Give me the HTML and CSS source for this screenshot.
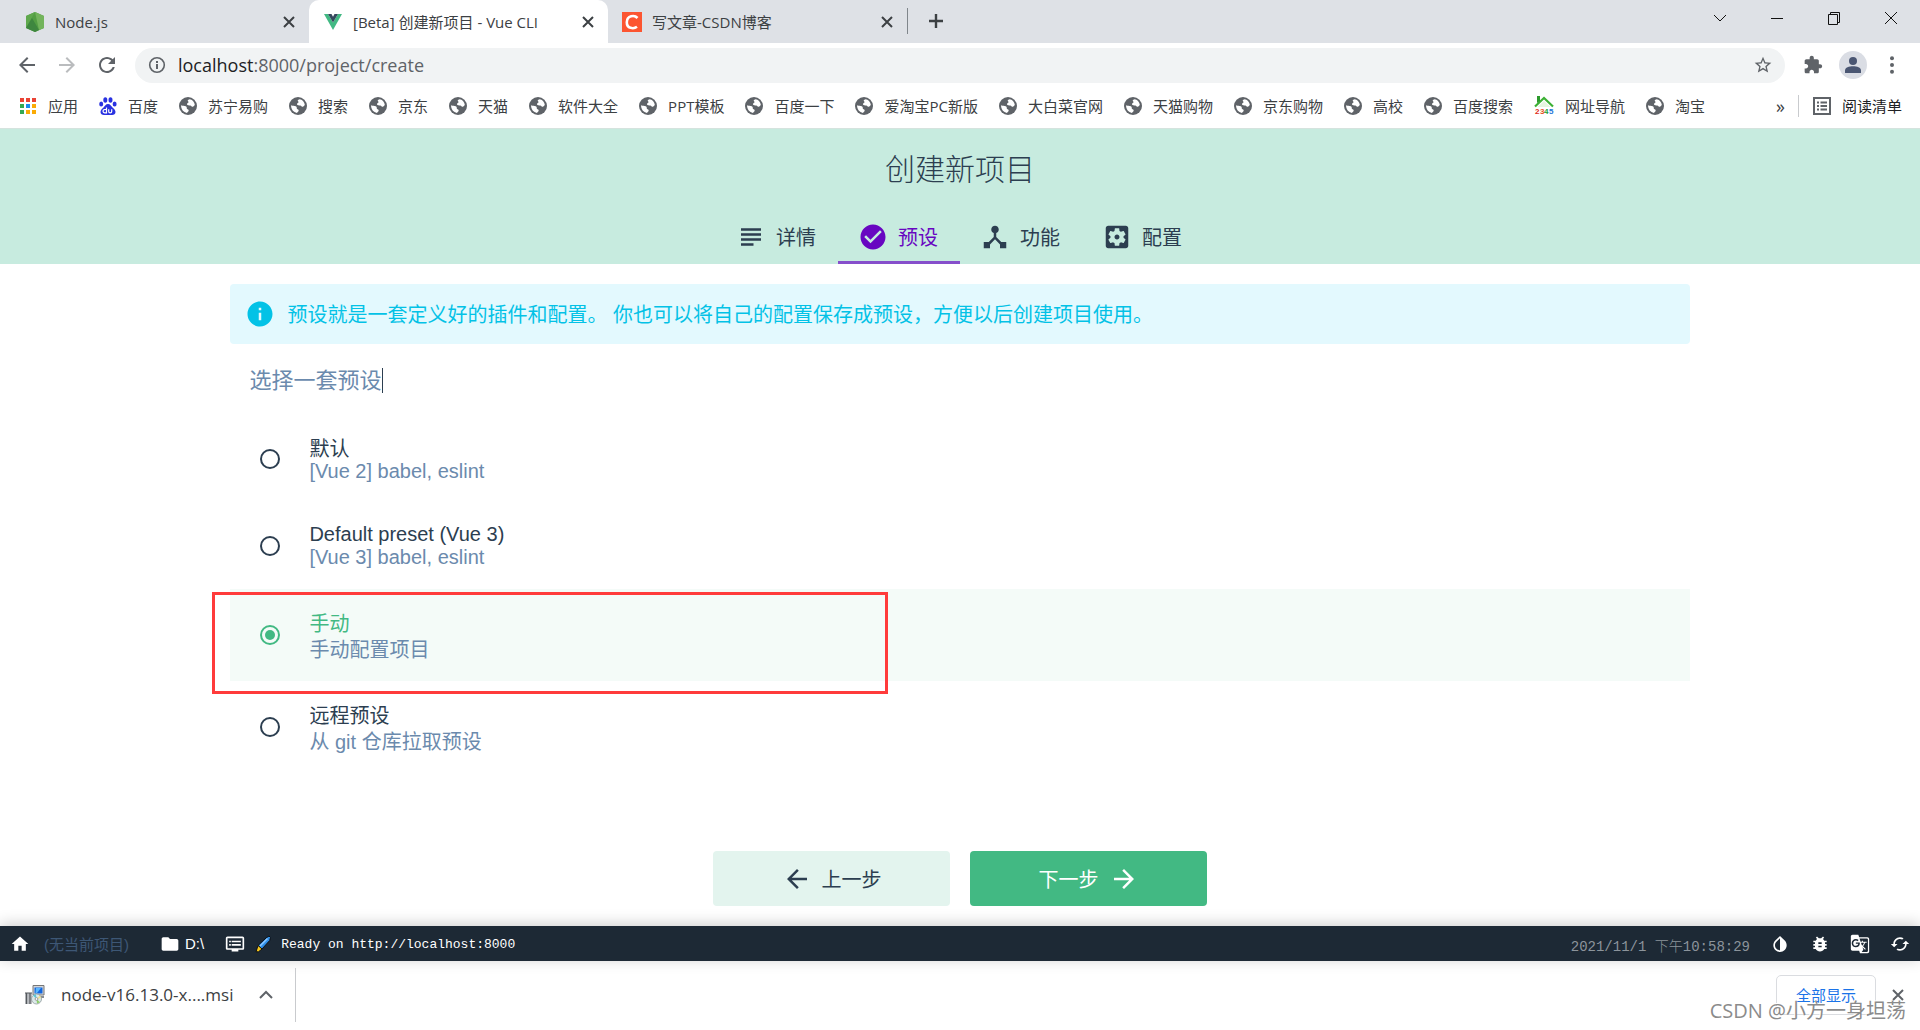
FILE: index.html
```html
<!DOCTYPE html>
<html lang="zh-CN">
<head>
<meta charset="utf-8">
<title>[Beta] 创建新项目 - Vue CLI</title>
<link rel="stylesheet" href="styles.css">
</head>
<body>
<svg class="defs" aria-hidden="true">
  <symbol id="globe" viewBox="0 0 18 18">
    <circle cx="9" cy="9" r="9" fill="#5f6368"/>
    <path d="M10.600 2.200C8.600 2.600 8.200 3.600 9.200 4.400 10.400 5.400 8.200 5.800 8 7 7.800 8.200 9.600 8.600 11 8.400 12.600 8.200 12.400 10 13.800 9.800 15.200 9.600 15.600 8.200 15.800 7.600 15.400 4.800 13.200 2.600 10.600 2.200ZM2.100 8.300C2.800 8.800 4.200 8.800 5.600 8.900 7.600 9 7.900 10.200 7.800 11.400 7.800 12.600 9.800 11.800 9.700 13.600 9.600 14.700 8.600 15.300 8 15.900 4.600 15.500 1.900 12.400 2.100 8.300Z" fill="#fff"/>
  </symbol>
  <symbol id="cross" viewBox="0 0 12 12"><path d="M1 1l10 10M11 1L1 11" fill="none" stroke="currentColor" stroke-width="2"/></symbol>
  <symbol id="back" viewBox="0 0 24 24"><path d="M20 11H7.830l5.590-5.590L12 4l-8 8 8 8 1.410-1.410L7.830 13H20v-2z"/></symbol>
  <symbol id="forward" viewBox="0 0 24 24"><path d="M12 4l-1.410 1.410L16.170 11H4v2h12.170l-5.580 5.590L12 20l8-8z"/></symbol>
</svg>

<header class="browser">
  <div class="tabstrip">
    <div class="tab">
      <svg class="favicon" viewBox="0 0 20 20"><path d="M10 0l9 4v12l-9 4-9-4V4z" fill="#539e43"/><path d="M10 0l9 4v12l-5 2z" fill="#73b45c"/><path d="M10 0L1 16V4z" fill="#5fa84d"/><path d="M1 16L7 6l7 12-4 2z" fill="#3f873f"/></svg>
      <span class="tab-title">Node.js</span>
      <button class="tab-close" aria-label="关闭"><svg><use href="#cross"/></svg></button>
    </div>
    <div class="tab tab-active">
      <svg class="favicon" viewBox="0 0 20 20"><path d="M1 2h4l5 8.500L15 2h4l-9 16z" fill="#42b983"/><path d="M5 2h3.500L10 4.700 11.500 2H15l-5 8.600z" fill="#35495e"/></svg>
      <span class="tab-title">[Beta] 创建新项目 - Vue CLI</span>
      <button class="tab-close" aria-label="关闭"><svg><use href="#cross"/></svg></button>
    </div>
    <div class="tab">
      <svg class="favicon" viewBox="0 0 20 20"><path d="M0 0h20v20H0z" fill="#fc5531"/><path d="M15.500 6C12.500 2.800 5 3.400 4.800 10.200 4.700 16.600 11.500 17.300 15 14.800" fill="none" stroke="#fff" stroke-width="2.600"/></svg>
      <span class="tab-title">写文章-CSDN博客</span>
      <button class="tab-close" aria-label="关闭"><svg><use href="#cross"/></svg></button>
    </div>
    <button class="new-tab" aria-label="新标签页"><svg viewBox="0 0 16 16"><path d="M8 1v14M1 8h14" stroke="#3c4043" stroke-width="2.400"/></svg></button>
    <div class="window-controls">
      <button aria-label="搜索标签页"><svg viewBox="0 0 14 14"><path d="M1 4l6 6 6-6"/></svg></button>
      <button aria-label="最小化"><svg viewBox="0 0 14 14"><path d="M1 7.500h12"/></svg></button>
      <button aria-label="还原"><svg viewBox="0 0 14 14"><path d="M1.500 3.500h9v10h-9zM3.500 3.500v-2h9v10h-2"/></svg></button>
      <button aria-label="关闭窗口"><svg viewBox="0 0 14 14"><path d="M1 1l12 12M13 1L1 13"/></svg></button>
    </div>
  </div>

  <div class="toolbar">
    <button class="nav" aria-label="后退"><svg><use href="#back"/></svg></button>
    <button class="nav nav-off" aria-label="前进" disabled><svg><use href="#forward"/></svg></button>
    <button class="nav" aria-label="重新加载"><svg viewBox="0 0 24 24"><path d="M17.650 6.350C16.200 4.900 14.210 4 12 4c-4.420 0-7.990 3.580-7.990 8s3.570 8 7.990 8c3.730 0 6.840-2.550 7.730-6h-2.080c-.82 2.330-3.040 4-5.650 4-3.310 0-6-2.690-6-6s2.690-6 6-6c1.660 0 3.140.69 4.220 1.780L13 11h7V4l-2.350 2.350z"/></svg></button>
    <div class="omnibox">
      <svg class="site-info" viewBox="0 0 18 18"><circle cx="9" cy="9" r="7.300" fill="none" stroke="#5f6368" stroke-width="1.600"/><path d="M8 8h2v5H8zM8 5h2v2H8z"/></svg>
      <span class="url"><b>localhost</b>:8000/project/create</span>
      <button class="star" aria-label="收藏"><svg viewBox="0 0 24 24"><path d="M22 9.240l-7.190-.62L12 2 9.190 8.630 2 9.240l5.460 4.730L5.820 21 12 17.270 18.180 21l-1.630-7.030L22 9.240zM12 15.400l-3.760 2.270 1-4.280-3.320-2.880 4.380-.38L12 6.100l1.710 4.040 4.380.38-3.320 2.880 1 4.280L12 15.400z"/></svg></button>
    </div>
    <button class="tool" aria-label="扩展程序"><svg viewBox="0 0 24 24"><path d="M20.500 11H19V7c0-1.100-.9-2-2-2h-4V3.500C13 2.120 11.880 1 10.500 1S8 2.120 8 3.500V5H4c-1.100 0-1.990.9-1.990 2v3.800H3.500c1.490 0 2.700 1.210 2.700 2.700s-1.210 2.700-2.700 2.700H2V20c0 1.100.9 2 2 2h3.800v-1.500c0-1.490 1.210-2.700 2.700-2.700 1.490 0 2.700 1.210 2.700 2.700V22H17c1.100 0 2-.9 2-2v-4h1.500c1.380 0 2.500-1.120 2.500-2.500S21.880 11 20.500 11z"/></svg></button>
    <button class="avatar" aria-label="用户"><svg viewBox="0 0 16 16"><circle cx="8" cy="4" r="4"/><path d="M0 16v-2.500C0 10.500 4 9.300 8 9.300s8 1.200 8 4.200V16z"/></svg></button>
    <button class="more" aria-label="菜单"><svg viewBox="0 0 4 18"><circle cx="2" cy="2.200" r="2"/><circle cx="2" cy="9" r="2"/><circle cx="2" cy="15.800" r="2"/></svg></button>
  </div>

  <nav class="bookmarks">
    <a href="#"><svg viewBox="0 0 18 18"><path d="M1 1h4v4H1zM7 1h4v4H7zM13 1h4v4h-4z" fill="#ea4335"/><path d="M1 7h4v4H1zM1 13h4v4H1z" fill="#34a853"/><path d="M7 7h4v4H7z" fill="#1a8cf0"/><path d="M13 7h4v4h-4zM7 13h4v4H7zM13 13h4v4h-4z" fill="#fbab05"/></svg>应用</a>
    <a href="#"><svg viewBox="0 0 18 18"><g fill="#2932e1"><ellipse cx="6.300" cy="3" rx="2" ry="2.800"/><ellipse cx="11.500" cy="3" rx="2" ry="2.800"/><ellipse cx="2.200" cy="7" rx="2" ry="2.600"/><ellipse cx="15.600" cy="7" rx="2" ry="2.600"/><path d="M9 7c2.300 0 3 2 4.500 3.500s3 2.500 3 4.500c0 2-1.500 3-3.500 3H5c-2 0-3.500-1-3.500-3s1.500-3 3-4.500S6.700 7 9 7z"/></g><path d="M7.500 10.500v5.300H5.800c-2.300 0-2.300-3.300 0-3.300h1.700M9.700 12.300v2.200c0 1.800 3 1.800 3 0v-2.200" fill="none" stroke="#fff" stroke-width="1.200"/></svg>百度</a>
    <a href="#"><svg><use href="#globe"/></svg>苏宁易购</a>
    <a href="#"><svg><use href="#globe"/></svg>搜索</a>
    <a href="#"><svg><use href="#globe"/></svg>京东</a>
    <a href="#"><svg><use href="#globe"/></svg>天猫</a>
    <a href="#"><svg><use href="#globe"/></svg>软件大全</a>
    <a href="#"><svg><use href="#globe"/></svg>PPT模板</a>
    <a href="#"><svg><use href="#globe"/></svg>百度一下</a>
    <a href="#"><svg><use href="#globe"/></svg>爱淘宝PC新版</a>
    <a href="#"><svg><use href="#globe"/></svg>大白菜官网</a>
    <a href="#"><svg><use href="#globe"/></svg>天猫购物</a>
    <a href="#"><svg><use href="#globe"/></svg>京东购物</a>
    <a href="#"><svg><use href="#globe"/></svg>高校</a>
    <a href="#"><svg><use href="#globe"/></svg>百度搜索</a>
    <a href="#"><svg class="house" viewBox="0 0 20 20"><path d="M1 10.500L10 2l9 8.500" fill="none" stroke="#3cb034" stroke-width="2.200"/><path d="M3 0h3v5L3 7z" fill="#2c9a2c"/><path d="M3.500 11L10 5l6.500 6z" fill="#e5f5df"/><g font-size="8" font-weight="700" font-family="Liberation Sans, sans-serif"><text x="1" y="18" fill="#e02b20">2</text><text x="6" y="18" fill="#e8501e">3</text><text x="10" y="18" fill="#22a03a">4</text><text x="15" y="18" fill="#2275d8">5</text></g></svg>网址导航</a>
    <a href="#"><svg><use href="#globe"/></svg>淘宝</a>
    <button class="overflow" aria-label="更多书签">»</button>
    <a class="reading" href="#"><svg viewBox="0 0 18 18"><path d="M1 1h16v16H1z" fill="none" stroke="#5f6368" stroke-width="2"/><path d="M4 4.500h2v2H4zM4 8h2v2H4zM4 11.500h2v2H4zM7.500 4.500H14v2H7.500zM7.500 8H14v2H7.500zM7.500 11.500H14v2H7.500z"/></svg>阅读清单</a>
  </nav>
</header>

<section class="project-head">
  <h1>创建新项目</h1>
  <nav class="steps">
    <a href="#"><svg viewBox="0 0 24 24"><path d="M14 17H4v2h10v-2zm6-8H4v2h16V9zM4 15h16v-2H4v2zM4 5v2h16V5H4z"/></svg>详情</a>
    <a href="#" class="current"><svg viewBox="0 0 24 24"><path d="M12 2C6.480 2 2 6.480 2 12s4.480 10 10 10 10-4.480 10-10S17.520 2 12 2zm-2 15l-5-5 1.410-1.410L10 14.170l7.590-7.590L19 8l-9 9z"/></svg>预设</a>
    <a href="#"><svg viewBox="0 0 24 24"><path d="M17 16l-4-4V8.820C14.160 8.400 15 7.300 15 6c0-1.660-1.340-3-3-3S9 4.340 9 6c0 1.300.84 2.400 2 2.820V12l-4 4H3v5h5v-3.050l4-4.200 4 4.200V21h5v-5h-4z"/></svg>功能</a>
    <a href="#"><svg viewBox="0 0 24 24"><path d="M12 10c-1.100 0-2 .9-2 2s.9 2 2 2 2-.9 2-2-.9-2-2-2zm7-7H5c-1.110 0-2 .9-2 2v14c0 1.100.89 2 2 2h14c1.110 0 2-.9 2-2V5c0-1.100-.89-2-2-2zm-1.750 9c0 .23-.02.46-.05.68l1.480 1.160c.13.11.17.3.08.45l-1.400 2.420c-.09.15-.27.21-.43.15l-1.740-.7c-.36.28-.76.51-1.180.69l-.26 1.850c-.03.17-.18.3-.35.3h-2.800c-.17 0-.32-.13-.35-.29l-.26-1.850c-.43-.18-.82-.41-1.180-.69l-1.740.7c-.16.06-.34 0-.43-.15l-1.400-2.420c-.09-.15-.05-.34.08-.45l1.480-1.160c-.03-.23-.05-.46-.05-.69 0-.23.02-.46.05-.68l-1.480-1.160c-.13-.11-.17-.3-.08-.45l1.400-2.420c.09-.15.27-.21.43-.15l1.740.7c.36-.28.76-.51 1.180-.69l.26-1.850c.03-.17.18-.3.35-.3h2.800c.17 0 .32.13.35.29l.26 1.850c.43.18.82.41 1.180.69l1.740-.7c.16-.06.34 0 .43.15l1.400 2.420c.09.15.05.34-.08.45l-1.480 1.160c.03.23.05.46.05.69z"/></svg>配置</a>
  </nav>
</section>

<main class="content">
  <p class="notice"><svg viewBox="0 0 24 24"><path d="M12 2C6.480 2 2 6.480 2 12s4.480 10 10 10 10-4.480 10-10S17.520 2 12 2zm1 15h-2v-6h2v6zm0-8h-2V7h2v2z"/></svg><span>预设就是一套定义好的插件和配置。 你也可以将自己的配置保存成预设，方便以后创建项目使用。</span></p>
  <h2><span>选择一套预设</span></h2>
  <form class="presets">
    <label class="preset"><input type="radio" name="preset"><span class="preset-text"><span class="name">默认</span><span class="desc latin">[Vue 2] babel, eslint</span></span></label>
    <label class="preset"><input type="radio" name="preset"><span class="preset-text"><span class="name latin">Default preset (Vue 3)</span><span class="desc latin">[Vue 3] babel, eslint</span></span></label>
    <label class="preset selected"><input type="radio" name="preset" checked><span class="preset-text"><span class="name">手动</span><span class="desc">手动配置项目</span></span></label>
    <label class="preset"><input type="radio" name="preset"><span class="preset-text"><span class="name">远程预设</span><span class="desc">从 git 仓库拉取预设</span></span></label>
  </form>
  <div class="actions">
    <button class="btn"><svg><use href="#back"/></svg>上一步</button>
    <button class="btn btn-primary">下一步<svg><use href="#forward"/></svg></button>
  </div>
</main>

<footer class="status">
  <a href="#" class="home" aria-label="主页"><svg viewBox="0 0 24 24"><path d="M10 20v-6h4v6h5v-8h3L12 3 2 12h3v8z"/></svg></a>
  <span class="no-project">(无当前项目)</span>
  <span class="cwd"><svg viewBox="0 0 24 24"><path d="M10 4H4c-1.100 0-1.990.9-1.990 2L2 18c0 1.100.9 2 2 2h16c1.100 0 2-.9 2-2V8c0-1.100-.9-2-2-2h-8l-2-2z"/></svg>D:\</span>
  <span class="log"><svg viewBox="0 0 24 24"><path d="M21 3H3c-1.100 0-2 .9-2 2v12c0 1.100.9 2 2 2h5v2h8v-2h5c1.100 0 1.990-.9 1.990-2L23 5c0-1.100-.9-2-2-2zm0 14H3V5h18v12zm-2-9H8v2h11V8zm0 4H8v2h11v-2zM7 8H5v2h2V8zm0 4H5v2h2v-2z"/></svg><svg class="crayon" viewBox="0 0 16 18"><path d="M14 1l1.500 1.500-.8 3L7 14l-4-3.500L11 3z" fill="#2f8fe8" stroke="#0b0f14"/><path d="M5 11l7.500-7.500" stroke="#8cc8ff" stroke-width="1.500"/><path d="M3 10.500L7 14l-3.500 2.800H1z" fill="#f7c81e" stroke="#0b0f14"/></svg><span class="mono">Ready on http://localhost:8000</span></span>
  <time class="mono">2021/11/1 下午10:58:29</time>
  <button aria-label="切换主题"><svg viewBox="0 0 24 24"><path d="M17.660 7.930L12 2.270 6.340 7.930c-3.120 3.120-3.120 8.190 0 11.310C7.900 20.800 9.950 21.580 12 21.580c2.050 0 4.100-.78 5.660-2.340 3.120-3.120 3.120-8.190 0-11.310zM12 19.590c-1.600 0-3.110-.62-4.240-1.760C6.620 16.690 6 15.190 6 13.590s.62-3.110 1.760-4.240L12 5.100v14.490z"/></svg></button>
  <button aria-label="报告问题"><svg viewBox="0 0 24 24"><path d="M20 8h-2.810c-.45-.78-1.070-1.450-1.820-1.960L17 4.410 15.590 3l-2.170 2.170C12.960 5.060 12.490 5 12 5c-.49 0-.96.06-1.410.17L8.410 3 7 4.410l1.620 1.630C7.880 6.550 7.260 7.220 6.810 8H4v2h2.090c-.05.33-.09.66-.09 1v1H4v2h2v1c0 .34.04.67.09 1H4v2h2.810c1.040 1.790 2.970 3 5.190 3s4.150-1.210 5.190-3H20v-2h-2.090c.05-.33.09-.66.09-1v-1h2v-2h-2v-1c0-.34-.04-.67-.09-1H20V8zm-6 8h-4v-2h4v2zm0-4h-4v-2h4v2z"/></svg></button>
  <button aria-label="翻译"><svg viewBox="0 0 24 24"><path d="M21 4H11l-1-3H3c-1.100 0-2 .9-2 2v15c0 1.100.9 2 2 2h8l1 3h9c1.100 0 2-.9 2-2V6c0-1.100-.9-2-2-2zM7 16c-2.760 0-5-2.240-5-5s2.240-5 5-5c1.350 0 2.480.5 3.350 1.300L9.030 8.570c-.38-.36-1.040-.78-2.030-.78-1.740 0-3.150 1.440-3.150 3.210S5.260 14.210 7 14.210c2.010 0 2.840-1.440 2.920-2.410H7v-1.710h4.680c.07.31.12.61.12 1.020C11.800 13.970 9.890 16 7 16zm6.170-5.420h3.700c-.43 1.250-1.110 2.430-2.050 3.470-.31-.35-.6-.72-.86-1.100l-.79-2.370zm8.330 9.920c0 .55-.45 1-1 1H14l2-2.500-1.040-3.100 3.100 3.100.92-.92-3.300-3.250.02-.02c1.130-1.250 1.930-2.690 2.400-4.220H20v-1.300h-4.530V8h-1.290v1.290h-1.440L11.460 5.500h9.040c.55 0 1 .45 1 1v14z"/></svg></button>
  <button aria-label="刷新"><svg viewBox="0 0 24 24"><path d="M19 8l-4 4h3c0 3.310-2.690 6-6 6-1.010 0-1.970-.25-2.800-.7l-1.460 1.460C8.970 19.540 10.430 20 12 20c4.420 0 8-3.580 8-8h3l-4-4zM6 12c0-3.310 2.690-6 6-6 1.010 0 1.970.25 2.800.7l1.460-1.460C15.030 4.460 13.570 4 12 4c-4.420 0-8 3.580-8 8H1l4 4 4-4H6z"/></svg></button>
</footer>

<aside class="shelf">
  <div class="download">
    <svg class="msi" viewBox="0 0 20 20"><path d="M8 .5h11v9.500H8z" fill="#d3d6d9" stroke="#777"/><path d="M9.500 2.500h8v6h-8z" fill="#1467dd"/><path d="M11 3h5l-4 5h-1.500z" fill="#58b7ff"/><path d="M10 11h9v2h-9z" fill="#888d92"/><path d="M0 8h7v11H0z" fill="#b9bcc0"/><path d="M0 8h7M1.500 8v11M5 8v11" stroke="#55595d" stroke-width="1.200"/><circle cx="11.500" cy="14" r="5" fill="#dce9ea" stroke="#8f9a9b" stroke-width=".8"/><path d="M11.500 14l-3.500-3.500 3-1.200z" fill="#5cc7d6"/><path d="M11.500 14l3.500 3.300-3 1.300z" fill="#8fcf6a"/><path d="M11.500 14l4.500-1-1-2.500z" fill="#f1e08c"/><circle cx="11.500" cy="14" r="1.400" fill="#fff" stroke="#888" stroke-width=".8"/></svg>
    <span class="file">node-v16.13.0-x....msi</span>
    <button aria-label="下载选项"><svg viewBox="0 0 14 14"><path d="M1 10l6-6 6 6" fill="none" stroke="#5f6368" stroke-width="2"/></svg></button>
  </div>
  <button class="show-all">全部显示</button>
  <button class="shelf-close" aria-label="关闭"><svg><use href="#cross"/></svg></button>
  <span class="watermark">CSDN @小方一身坦荡</span>
</aside>
</body>
</html>
```

FILE: styles.css
```css
*, *::after { box-sizing: border-box; }
body {
  margin: 0;
  min-height: 100vh;
  display: flex;
  flex-direction: column;
  background: #fff;
  color: #2c3e50;
  font-family: "Liberation Sans", "Noto Sans CJK SC", sans-serif;
  font-size: 20px;
}
button { border: 0; padding: 0; background: none; font: inherit; color: inherit; display: flex; align-items: center; justify-content: center; flex: none; }
a { color: inherit; text-decoration: none; }
svg { display: block; flex: none; fill: currentColor; }
.defs { position: absolute; width: 0; height: 0; }

/* Browser frame */
.browser { font-family: "Open Sans", "Noto Sans CJK SC", sans-serif; font-size: 15px; color: #3c4043; border-bottom: 1px solid #d5e3de; }
.tabstrip { display: flex; height: 43px; background: #dee1e6; }
.tab { display: flex; align-items: center; width: 299px; padding: 0 14px; gap: 10px; }
.tab:first-child { width: 309px; padding-left: 25px; }
.tab-active { background: #fff; border-radius: 10px 10px 0 0; }
.favicon { width: 20px; height: 20px; }
.tab-title { flex: 1; white-space: nowrap; overflow: hidden; line-height: 22px; }
.tab-close svg { width: 12px; height: 12px; }
.new-tab { height: 26px; margin-top: 8px; padding: 0 20px; border-left: 1px solid #80868b; }
.new-tab svg { width: 16px; height: 16px; }
.window-controls { display: flex; margin: 0 1px 0 auto; }
.window-controls button { width: 57px; height: 36px; }
.window-controls svg { width: 14px; height: 14px; fill: none; stroke: #111; }
.toolbar { display: flex; align-items: center; height: 44px; padding: 0 26px 0 15px; color: #5f6368; }
.nav { width: 24px; margin-right: 16px; }
.nav svg { width: 24px; height: 24px; }
.nav-off { color: #babcbe; }
.omnibox { flex: 1; display: flex; align-items: center; height: 35px; margin-right: 18px; padding: 0 12px 0 13px; gap: 12px; border-radius: 18px; background: #f1f3f4; font-size: 18px; }
.site-info { width: 18px; height: 18px; }
.url { flex: 1; line-height: 24px; }
.url b { font-weight: 400; color: #202124; }
.star svg { width: 20px; height: 20px; }
.tool svg { width: 20px; height: 20px; }
.avatar { width: 28px; height: 28px; margin: 0 23px 0 16px; border-radius: 50%; background: #dadde4; color: #4a5672; }
.avatar svg { width: 16px; height: 16px; }
.more svg { width: 4px; height: 18px; }
.bookmarks { display: flex; align-items: center; height: 41px; padding: 0 18px 4px 19px; gap: 21px; white-space: nowrap; }
.bookmarks a { display: flex; align-items: center; gap: 11px; line-height: 22px; }
.bookmarks svg { width: 18px; height: 18px; fill: #5f6368; }
.bookmarks .house { width: 20px; height: 20px; }
.overflow { margin-left: auto; font-size: 18px; }
.bookmarks .reading { padding-left: 14px; border-left: 1px solid #c9cbce; color: #202124; margin-left: -8px; }

/* Project creation header */
.project-head { background: #c7ebdf; text-align: center; }
h1 { margin: 0; padding: 18px 0 21px; font-size: 30px; line-height: 45px; font-weight: 300; }
.steps { display: flex; justify-content: center; }
.steps a { display: flex; align-items: center; gap: 10px; height: 51px; padding: 0 22px 1px 20px; border-bottom: 3px solid transparent; }
.steps svg, .notice svg, .btn svg { width: 30px; height: 30px; }
.steps .current { color: #6806c1; border-color: #864fcb; }

.content { flex: 1; display: flex; flex-direction: column; padding: 20px 12% 20px; }
.notice { display: flex; align-items: center; gap: 12px; margin: 0; padding: 15px; border-radius: 4px; background: #e3f9fe; color: #03c2e6; line-height: 28px; }
.notice span { padding-top: 2px; }
h2 { margin: 0; padding: 22px 20px 18px 19px; font-size: 22px; line-height: 30px; font-weight: 400; color: #6b8aad; }
h2 span { padding-right: 1px; border-right: 1px solid #2c3e50; }
.presets { display: flex; flex-direction: column; }
.preset { position: relative; display: flex; align-items: center; gap: 29px; padding: 20px 30px; }
.preset input { appearance: none; margin: 0; width: 20px; height: 20px; border: 2px solid #2c3e50; border-radius: 50%; }
.preset input:checked { border-color: #42b983; background: #42b983; background-clip: content-box; padding: 3px; }
.preset-text { display: flex; flex-direction: column; }
.name, .desc { padding-top: 4px; line-height: 22px; }
.latin { padding-top: 0; line-height: 23px; }
.desc { color: #6b8aad; }
.selected { background: #f4fbf8; }
.selected .name { color: #42b983; }
/* Highlight frame drawn over the chosen preset */
.selected::after { content: ""; position: absolute; top: 3px; left: -18px; width: 676px; height: 102px; border: 3px solid #ff3b3b; }
.actions { display: flex; justify-content: center; gap: 20px; margin-top: auto; }
.btn { width: 237px; height: 55px; gap: 10px; border-radius: 4px; background: #e3f4ee; }
.btn-primary { background: #42b983; color: #fff; }

/* Status bar */
.status { position: relative; display: flex; align-items: center; height: 35px; padding: 0 10px; background: #1d2935; color: #fff; font-size: 15px; box-shadow: 0 -2px 15px rgba(0, 0, 0, .2); }
.status svg { width: 20px; height: 20px; }
.no-project { margin: 0 31px 0 14px; color: #3d5775; }
.cwd { display: flex; align-items: center; gap: 5px; margin-right: 21px; }
.log { display: flex; align-items: center; gap: 10px; }
.status .crayon { width: 16px; height: 18px; }
.mono { padding-top: 2px; font-family: "Liberation Mono", "Noto Sans CJK SC", monospace; font-size: 13px; }
time { margin-left: auto; margin-right: 10px; color: #8c949b; font-weight: 300; }
time.mono { font-size: 14px; }
.status button { width: 40px; }
.status button:last-child { width: 20px; margin: 0 0 0 10px; }

/* Download shelf */
.shelf { position: relative; display: flex; align-items: center; height: 69px; padding: 0 16px 2px 0; font-family: "Open Sans", "Noto Sans CJK SC", sans-serif; color: #3c4043; }
.download { display: flex; align-items: center; height: 54px; width: 296px; padding: 0 22px 0 25px; border-right: 1px solid #c9cbce; }
.msi { width: 20px; height: 20px; margin-right: 16px; }
.file { font-size: 17px; line-height: 24px; }
.download button { margin-left: auto; }
.download button svg { width: 14px; height: 14px; }
.show-all { width: 100px; height: 40px; margin-left: auto; border: 1px solid #dadce0; border-radius: 5px; color: #1a73e8; font-size: 15px; }
.shelf-close { margin-left: 16px; color: #5f6368; }
.shelf-close svg { width: 12px; height: 12px; }
.watermark { position: absolute; right: 14px; bottom: 4px; font-size: 20px; line-height: 30px; color: #8b8b8b; text-shadow: -1px -1px 0 #fff; }
```
